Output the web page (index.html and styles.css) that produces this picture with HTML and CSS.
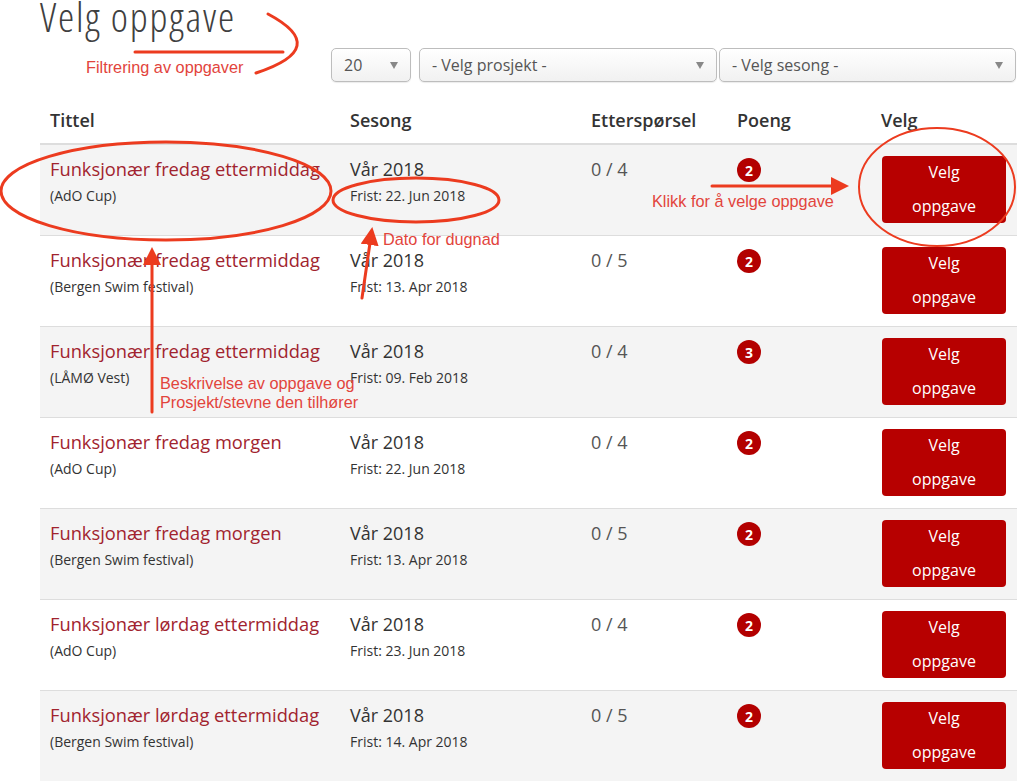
FILE: index.html
```html
<!DOCTYPE html>
<html lang="nb">
<head>
<meta charset="UTF-8">
<meta name="viewport" content="width=device-width, initial-scale=1.0">
<title>Velg oppgave</title>
<link rel="stylesheet" href="styles.css">
</head>
<body>
<div class="page">
  <h1 class="pageTitle">Velg oppgave</h1>

  <div class="filters">
    <div class="select small"><span>20</span><span class="caret"></span></div>
    <div class="select wide"><span>- Velg prosjekt -</span><span class="caret"></span></div>
    <div class="select wide last"><span>- Velg sesong -</span><span class="caret"></span></div>
  </div>

  <table class="tasks">
    <colgroup>
      <col class="colTitle">
      <col class="colSeason">
      <col class="colDemand">
      <col class="colPoints">
      <col class="colPick">
    </colgroup>
    <thead>
      <tr>
        <th>Tittel</th>
        <th>Sesong</th>
        <th>Etterspørsel</th>
        <th>Poeng</th>
        <th>Velg</th>
      </tr>
    </thead>
    <tbody>
      <tr>
        <td><div class="taskName">Funksjonær fredag ettermiddag</div><div class="sub">(AdO Cup)</div></td>
        <td><div class="season">Vår 2018</div><div class="sub">Frist: 22. Jun 2018</div></td>
        <td class="demand">0 / 4</td>
        <td><span class="badge">2</span></td>
        <td><button class="pickBtn">Velg<br>oppgave</button></td>
      </tr>
      <tr>
        <td><div class="taskName">Funksjonær fredag ettermiddag</div><div class="sub">(Bergen Swim festival)</div></td>
        <td><div class="season">Vår 2018</div><div class="sub">Frist: 13. Apr 2018</div></td>
        <td class="demand">0 / 5</td>
        <td><span class="badge">2</span></td>
        <td><button class="pickBtn">Velg<br>oppgave</button></td>
      </tr>
      <tr>
        <td><div class="taskName">Funksjonær fredag ettermiddag</div><div class="sub">(LÅMØ Vest)</div></td>
        <td><div class="season">Vår 2018</div><div class="sub">Frist: 09. Feb 2018</div></td>
        <td class="demand">0 / 4</td>
        <td><span class="badge">3</span></td>
        <td><button class="pickBtn">Velg<br>oppgave</button></td>
      </tr>
      <tr>
        <td><div class="taskName">Funksjonær fredag morgen</div><div class="sub">(AdO Cup)</div></td>
        <td><div class="season">Vår 2018</div><div class="sub">Frist: 22. Jun 2018</div></td>
        <td class="demand">0 / 4</td>
        <td><span class="badge">2</span></td>
        <td><button class="pickBtn">Velg<br>oppgave</button></td>
      </tr>
      <tr>
        <td><div class="taskName">Funksjonær fredag morgen</div><div class="sub">(Bergen Swim festival)</div></td>
        <td><div class="season">Vår 2018</div><div class="sub">Frist: 13. Apr 2018</div></td>
        <td class="demand">0 / 5</td>
        <td><span class="badge">2</span></td>
        <td><button class="pickBtn">Velg<br>oppgave</button></td>
      </tr>
      <tr>
        <td><div class="taskName">Funksjonær lørdag ettermiddag</div><div class="sub">(AdO Cup)</div></td>
        <td><div class="season">Vår 2018</div><div class="sub">Frist: 23. Jun 2018</div></td>
        <td class="demand">0 / 4</td>
        <td><span class="badge">2</span></td>
        <td><button class="pickBtn">Velg<br>oppgave</button></td>
      </tr>
      <tr>
        <td><div class="taskName">Funksjonær lørdag ettermiddag</div><div class="sub">(Bergen Swim festival)</div></td>
        <td><div class="season">Vår 2018</div><div class="sub">Frist: 14. Apr 2018</div></td>
        <td class="demand">0 / 5</td>
        <td><span class="badge">2</span></td>
        <td><button class="pickBtn">Velg<br>oppgave</button></td>
      </tr>
    </tbody>
  </table>
</div>

<!-- annotations drawn over the screenshot -->
<div class="notes">
  <svg class="marks" width="1024" height="784" viewBox="0 0 1024 784">
    <defs>
      <marker id="head" markerWidth="6" markerHeight="6" refX="3" refY="3" orient="auto" markerUnits="strokeWidth">
        <path d="M0,0 L6,3 L0,6 Z" fill="#ec3b1f"/>
      </marker>
    </defs>
    <g fill="none" stroke="#ec3b1f" stroke-width="3" stroke-linecap="round">
      <path d="M268,14 Q332,48 256,73"/>
      <path d="M135,52 L283,52"/>
      <ellipse cx="166" cy="191" rx="165" ry="49"/>
      <ellipse cx="416" cy="200" rx="83" ry="22"/>
      <path d="M152,412 L152,256" marker-end="url(#head)"/>
      <path d="M362,298 L371,236" marker-end="url(#head)"/>
      <path d="M712,186 L840,186" marker-end="url(#head)"/>
      <ellipse cx="937" cy="187" rx="78" ry="59" stroke-width="2"/>
    </g>
  </svg>
  <span class="note noteFilter">Filtrering av oppgaver</span>
  <span class="note noteDate">Dato for dugnad</span>
  <span class="note noteDesc">Beskrivelse av oppgave og<br>Prosjekt/stevne den tilhører</span>
  <span class="note noteClick">Klikk for å velge oppgave</span>
</div>
</body>
</html>
```

FILE: styles.css
```css
body {
  margin: 0;
  background: #ffffff;
  font-family: "Open Sans", "DejaVu Sans", sans-serif;
  color: #333333;
  position: relative;
  width: 1024px;
  height: 784px;
  overflow: hidden;
}

.page {
  padding-left: 40px;
  width: 977px;
}

.pageTitle {
  margin: 0;
  font-size: 41px;
  font-weight: 300;
  font-stretch: 75%;
  letter-spacing: 1.8px;
  line-height: 33px;
  color: #404040;
}

.filters {
  display: flex;
  justify-content: flex-end;
  margin-top: 15px;
  padding-right: 1px;
}

.select {
  display: flex;
  align-items: center;
  justify-content: space-between;
  box-sizing: border-box;
  height: 34px;
  padding: 0 12px;
  border: 1px solid #bdbdbd;
  border-radius: 5px;
  background: linear-gradient(#ffffff, #f1f1f1);
  box-shadow: 0 1px 1px rgba(0, 0, 0, 0.08);
  font-size: 16px;
  color: #555555;
}

.select.small {
  width: 80px;
  margin-right: 8px;
}

.select.wide {
  width: 298px;
  margin-right: 2px;
}

.select.last {
  width: 297px;
  margin-right: 0;
}

.caret {
  width: 0;
  height: 0;
  border-left: 4px solid transparent;
  border-right: 4px solid transparent;
  border-top: 7px solid #888888;
}

.tasks {
  width: 977px;
  margin-top: 13px;
  border-collapse: collapse;
  table-layout: fixed;
}

.colTitle { width: 300px; }
.colSeason { width: 241px; }
.colDemand { width: 146px; }
.colPoints { width: 144px; }
.colPick { width: 146px; }

.tasks th {
  text-align: left;
  font-size: 18px;
  font-weight: 600;
  line-height: 26px;
  padding: 12px 10px 10px;
  border-bottom: 2px solid #dddddd;
  color: #333333;
}

.tasks td {
  vertical-align: top;
  padding: 11px 10px 12px;
  border-top: 1px solid #dddddd;
  height: 67px;
}

.tasks tbody tr:first-child td {
  border-top: 0;
}

.tasks tbody tr:nth-child(odd) {
  background: #f4f4f4;
}

.taskName {
  font-size: 18.3px;
  line-height: 26px;
  color: #a1232e;
}

.season {
  font-size: 18px;
  line-height: 26px;
  color: #333333;
}

.sub {
  margin-top: 4px;
  font-size: 14px;
  line-height: 20px;
  color: #333333;
}

.demand {
  font-size: 18px;
  line-height: 26px;
  color: #555555;
}

.badge {
  display: inline-flex;
  align-items: center;
  justify-content: center;
  margin-top: 2px;
  width: 24px;
  height: 24px;
  border-radius: 50%;
  background: #b30000;
  color: #ffffff;
  font-size: 14px;
  font-weight: 700;
}

.pickBtn {
  display: block;
  width: 124px;
  height: 67px;
  margin-left: 1px;
  padding: 0;
  border: 0;
  border-radius: 4px;
  background: #b70000;
  color: #ffffff;
  font-family: "Open Sans", "DejaVu Sans", sans-serif;
  font-size: 16px;
  line-height: 33.5px;
}

/* annotation layer */
.notes {
  position: absolute;
  left: 0;
  top: 0;
  width: 1024px;
  height: 784px;
  pointer-events: none;
}

.marks {
  position: absolute;
  left: 0;
  top: 0;
}

.note {
  position: absolute;
  font-family: "Liberation Sans", Arial, sans-serif;
  font-size: 16.3px;
  line-height: 19px;
  color: #e2443c;
  white-space: nowrap;
}

.noteFilter { left: 86px; top: 58px; }
.noteDate { left: 383px; top: 230px; }
.noteDesc { left: 160px; top: 374px; }
.noteClick { left: 652px; top: 192px; }
```
